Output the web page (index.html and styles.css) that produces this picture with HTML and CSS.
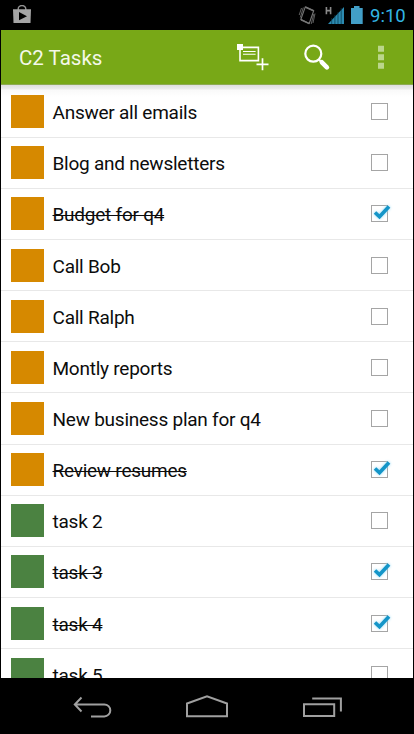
FILE: index.html
```
<!DOCTYPE html>
<html lang="en">
<head>
    <meta charset="UTF-8">
    <meta name="viewport" content="width=device-width, initial-scale=1.0">
    <title>C2 Tasks</title>
    <link rel="stylesheet" href="styles.css">
</head>
<body>

<div class="status-bar">
    <svg class="store-icon" width="18" height="19" viewBox="0 0 18 19">
        <path d="M5.2 5V4a3.8 3.5 0 0 1 7.6 0v1" fill="none" stroke="#929292" stroke-width="1.4"/>
        <path d="M0 4.3h18l-.5 13.7H.5z" fill="#a5a5a5"/>
        <path d="M6 7l8 4.3-8 4z" fill="#000"/>
    </svg>
    <div class="status-right">
        <svg width="66" height="20" viewBox="298 5 66 20">
            <!-- vibrate -->
            <g fill="none" stroke="#777" stroke-width="1.1">
                <path d="M305.3 6.9l8.4 3.8-4.5 12.8-8.4-4z"/>
                <path d="M301.5 8l-2.3 7M303.3 7.5l-3 10M313 23l2-9.5M311.2 24l2.6-10" stroke-width=".8"/>
                <path d="M305.3 7l8.3 3.7M301 19.7l8.3 3.9" stroke-width="1.6"/>
            </g>
            <!-- mobile signal -->
            <path d="M326.4 7v7.3M330.6 7v7.3M326.4 10.6h4.2" fill="none" stroke="#8a8a8a" stroke-width="1.6"/>
            <path d="M328 24L344 7v17z" fill="#2c8ab0"/>
            <path d="M331.7 18v6M334.9 15v9M338 12v12M341.2 8v16" stroke="#06384b" stroke-width=".7"/>
            <!-- battery -->
            <path d="M354 6h5.5v2h3.2v16H351V8h3z" fill="#429fc7"/>
        </svg>
        <span class="clock">9:10</span>
    </div>
</div>

<div class="app">
    <header>
        <h1>C2 Tasks</h1>
        <svg class="actions" width="152" height="32" viewBox="235 42 152 32">
            <!-- add task -->
            <g fill="none" stroke="#fff">
                <path d="M240 47.4h18.4V60.6H240z" stroke-width="1.6"/>
                <path d="M243 51.5h12.6M243 54.3h12.6" stroke-width="1.1"/>
                <path d="M262.5 58.3v12M256.5 64.3h12" stroke-width="1.7"/>
            </g>
            <path d="M237 44h6v6h-6z" fill="#fff"/>
            <!-- search -->
            <circle cx="313.3" cy="53.7" r="8" fill="none" stroke="#fff" stroke-width="2.2"/>
            <path d="M318.8 59.5l2.5 2.6" stroke="#fff" stroke-width="2.2"/>
            <path d="M321.9 62.3l5 5" stroke="#fff" stroke-width="4.6" stroke-linecap="round"/>
            <!-- overflow menu -->
            <path d="M378 45.7h6v6h-6zM378 54.2h6v6h-6zM378 62.8h6v6h-6z" fill="#bbd68b"/>
        </svg>
    </header>

    <ul class="tasks">
        <li><i class="tag"></i><span>Answer all emails</span><i class="check"></i></li>
        <li><i class="tag"></i><span>Blog and newsletters</span><i class="check"></i></li>
        <li class="done"><i class="tag"></i><span>Budget for q4</span><i class="check"><svg viewBox="0 0 22 18"><path d="M4 8.5l4.5 4.3L18 2.5"/></svg></i></li>
        <li><i class="tag"></i><span>Call Bob</span><i class="check"></i></li>
        <li><i class="tag"></i><span>Call Ralph</span><i class="check"></i></li>
        <li><i class="tag"></i><span>Montly reports</span><i class="check"></i></li>
        <li><i class="tag"></i><span>New business plan for q4</span><i class="check"></i></li>
        <li class="done"><i class="tag"></i><span>Review resumes</span><i class="check"><svg viewBox="0 0 22 18"><path d="M4 8.5l4.5 4.3L18 2.5"/></svg></i></li>
        <li><i class="tag green"></i><span>task 2</span><i class="check"></i></li>
        <li class="done"><i class="tag green"></i><span>task 3</span><i class="check"><svg viewBox="0 0 22 18"><path d="M4 8.5l4.5 4.3L18 2.5"/></svg></i></li>
        <li class="done"><i class="tag green"></i><span>task 4</span><i class="check"><svg viewBox="0 0 22 18"><path d="M4 8.5l4.5 4.3L18 2.5"/></svg></i></li>
        <li><i class="tag green"></i><span>task 5</span><i class="check"></i></li>
    </ul>
</div>

<nav>
    <svg width="414" height="56" viewBox="0 678 414 56" fill="none" stroke="#a0a0a0" stroke-width="2">
        <path d="M81.5 697.5l-6.7 7 6.7 7M75.5 704.4h28.8a6 6 0 0 1 0 12H91"/>
        <path d="M187 716.2v-12.7l20-7.2 20 7.2v12.7z"/>
        <path d="M304 704.2h30.2v11.9H304zM312.2 698.4h28.7v13"/>
    </svg>
</nav>

</body>
</html>
```

FILE: styles.css
```
body {
    margin: 0;
    height: 734px;
    overflow: hidden;
    display: flex;
    flex-direction: column;
    background-color: #000;
    font-family: Roboto, sans-serif;
}

.status-bar {
    height: 30px;
    flex: none;
    display: flex;
    justify-content: space-between;
    box-sizing: border-box;
    padding: 5px 7px 0 13px;
}

.status-right {
    display: flex;
}

.clock {
    margin-left: 6px;
    width: 37px;
    color: #33b5e5;
    font-size: 18.5px;
    line-height: 22px;
    white-space: nowrap;
}

.app {
    height: 648px;
    flex: none;
    margin: 0 1px;
    overflow: hidden;
    background-color: #fff;
}

header {
    height: 55px;
    display: flex;
    align-items: center;
    justify-content: space-between;
    box-sizing: border-box;
    padding: 0 26px 0 18px;
    background-color: #78a817;
    border-bottom: 1px solid #8daa52;
}

header h1 {
    margin: 1px 0 0;
    color: #f4f8e9;
    font-size: 20.5px;
    font-weight: normal;
}

.actions {
    margin-top: 1px;
}

.tasks {
    list-style: none;
    margin: 0;
    padding: 1.6px 0 0;
    background: linear-gradient(#dedede, #ececec 4px, #f9f9f9 5px, #fff 12px);
}

.tasks li {
    height: 51.15px;
    display: flex;
    align-items: center;
    box-sizing: border-box;
    padding: 0 25px 0 10px;
    border-bottom: 1px solid #e8e8e8;
}

.tasks span {
    margin: 2px 0 0 8.5px;
    color: #0c0c0c;
    font-size: 19px;
    letter-spacing: -0.24px;
}

.done span {
    text-decoration: line-through;
    text-decoration-thickness: 1px;
}

.tag {
    width: 33px;
    height: 33px;
    background-color: #d68900;
}

.tag.green {
    background-color: #4b8241;
}

.check {
    width: 17px;
    height: 17px;
    margin-left: auto;
    box-sizing: border-box;
    border: 1px solid #a5a5a5;
}

.check svg {
    display: block;
    width: 22px;
    height: 18px;
    margin: -2px 0 0 -1px;
    fill: none;
    stroke: #1495c8;
    stroke-width: 3.6;
    filter: drop-shadow(0 0 1.5px #8fd8f5);
}

nav {
    height: 56px;
    flex: none;
}

nav svg {
    display: block;
}
```
